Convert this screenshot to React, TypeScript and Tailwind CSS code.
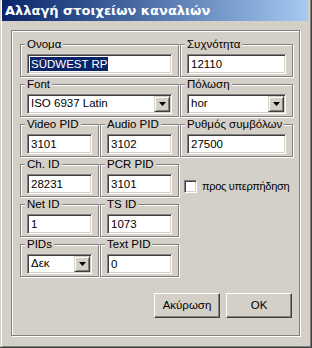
import React from 'react';

const sunken =
  'border border-t-[#808080] border-l-[#808080] border-b-white border-r-white shadow-[inset_1px_1px_0_#404040,inset_-1px_-1px_0_#D4D0C8] bg-white';

function Group({ label, className = '', children }: { label: string; className?: string; children?: React.ReactNode }) {
  return (
    <fieldset
      className={`h-[39px] min-w-0 border border-[#808080] shadow-[inset_1px_1px_0_#fff,1px_1px_0_#fff] px-[6px] ${className}`}
    >
      <legend className="ml-[-2px] px-[2px] leading-[12px] bg-[#D4D0C8]">{label}</legend>
      <div className="pt-[4px]">{children}</div>
    </fieldset>
  );
}

function Edit({ value }: { value: string }) {
  return (
    <div className={`h-[20px] flex items-center pl-[3px] ${sunken}`}>
      <span className="leading-[14px]">{value}</span>
    </div>
  );
}

function Combo({ value }: { value: string }) {
  return (
    <div className={`h-[20px] flex items-stretch p-px ${sunken}`}>
      <span className="flex-1 flex items-center pl-[2px]">{value}</span>
      <div className="w-[16px] flex items-center justify-center bg-[#D4D0C8] border border-t-[#D4D0C8] border-l-[#D4D0C8] border-r-[#404040] border-b-[#404040] shadow-[inset_1px_1px_0_#fff,inset_-1px_-1px_0_#808080]">
        <svg width="7" height="4" viewBox="0 0 7 4">
          <polygon points="0,0 7,0 3.5,4" fill="#000" />
        </svg>
      </div>
    </div>
  );
}

function Button({ children }: { children: React.ReactNode }) {
  return (
    <button className="w-[66px] h-[25px] flex items-center justify-center bg-[#D4D0C8] border border-t-white border-l-white border-r-[#404040] border-b-[#404040] shadow-[inset_-1px_-1px_0_#808080]">
      {children}
    </button>
  );
}

export default function App() {
  return (
    <div className="w-[312px] h-[348px] flex flex-col bg-[#D4D0C8] border-r border-b border-[#404040] text-[11.5px] text-black whitespace-nowrap font-['Liberation_Sans',Arial,sans-serif]">
      <div className="flex-1 flex flex-col ml-px border-l border-white border-r border-b border-r-[#808080] border-b-[#808080] pr-[2px]">
        <div className="h-[21px] flex items-center pl-[3px] bg-linear-to-r from-[#0A246A] to-[#A6CAF0] text-white font-bold text-[13px] font-['DejaVu_Sans',sans-serif]">
          Αλλαγή στοιχείων καναλιών
        </div>

        <div className="mt-[9px] ml-[9px] w-[289px] h-[306px] border border-[#808080] shadow-[inset_1px_1px_0_#fff,1px_1px_0_#fff] pt-[7px] pl-[8px]">
          <div className="grid grid-cols-[80px_80px_113px] auto-rows-[40px]">
            <Group label="Ονομα" className="col-span-2 w-[159px]">
              <div className={`h-[20px] flex items-center pl-[2px] ${sunken}`}>
                <span className="leading-[14px] bg-[#0A246A] text-white px-px">SÜDWEST RP</span>
              </div>
            </Group>
            <Group label="Συχνότητα" className="w-[113px]">
              <Edit value="12110" />
            </Group>

            <Group label="Font" className="col-span-2 w-[159px]">
              <Combo value="ISO 6937 Latin" />
            </Group>
            <Group label="Πόλωση" className="w-[113px]">
              <Combo value="hor" />
            </Group>

            <Group label="Video PID" className="w-[79px]">
              <Edit value="3101" />
            </Group>
            <Group label="Audio PID" className="w-[79px]">
              <Edit value="3102" />
            </Group>
            <Group label="Ρυθμός συμβόλων" className="w-[113px]">
              <Edit value="27500" />
            </Group>

            <Group label="Ch. ID" className="w-[79px]">
              <Edit value="28231" />
            </Group>
            <Group label="PCR PID" className="w-[79px]">
              <Edit value="3101" />
            </Group>
            <div className="pl-[4px] pt-[22px]">
              <div className="h-[13px] flex items-center gap-[5px]">
                <div className={`w-[13px] h-[13px] shrink-0 ${sunken}`} />
                <span className="text-[11px] tracking-[-0.3px]">προς υπερπήδηση</span>
              </div>
            </div>

            <Group label="Net ID" className="w-[79px]">
              <Edit value="1" />
            </Group>
            <Group label="TS ID" className="w-[79px]">
              <Edit value="1073" />
            </Group>
            <div />

            <Group label="PIDs" className="w-[79px]">
              <Combo value="Δεκ" />
            </Group>
            <Group label="Text PID" className="w-[79px]">
              <Edit value="0" />
            </Group>
            <div />
          </div>

          <div className="mt-[15px] w-[272px] flex justify-end gap-[6px]">
            <Button>Ακύρωση</Button>
            <Button>OK</Button>
          </div>
        </div>
      </div>
    </div>
  );
}
